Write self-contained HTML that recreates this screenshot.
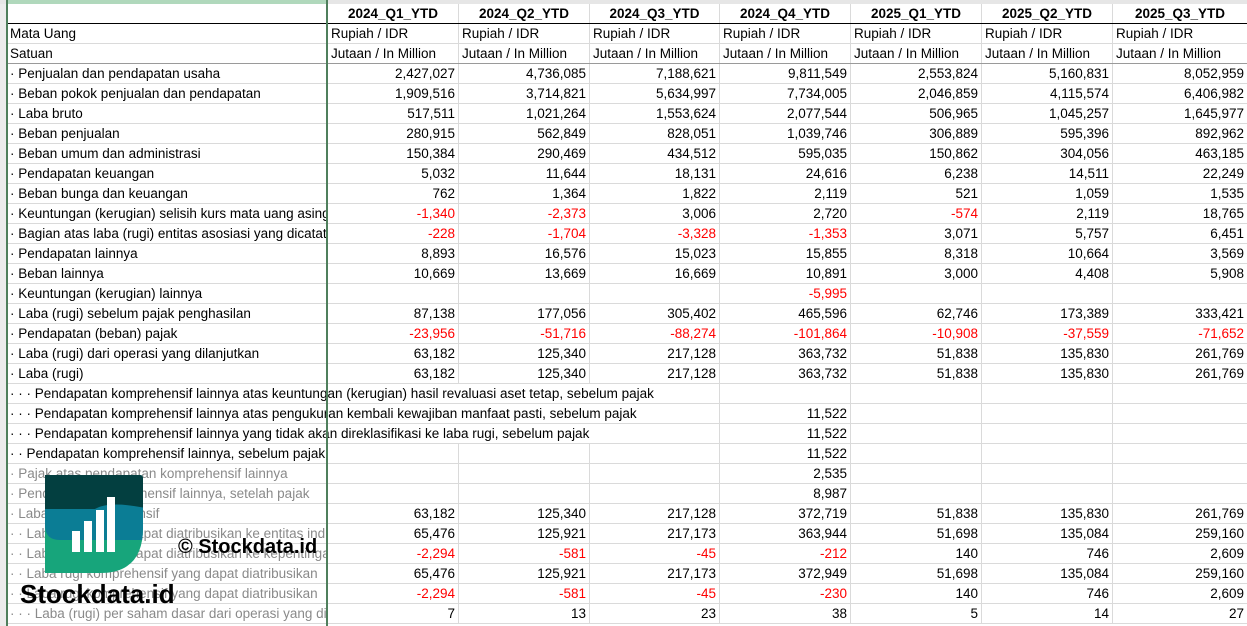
<!DOCTYPE html>
<html><head><meta charset="utf-8"><style>
body{margin:0;width:1247px;height:626px;overflow:hidden;background:#fff;font-family:"Liberation Sans",Arial,sans-serif;font-size:13.5px;position:relative}
#top{position:absolute;left:0;top:0;width:1247px;height:4px;background:#e6e6e6}
#topg{position:absolute;left:6px;top:0;width:321px;height:4px;background:#b0d8bc}
#lefth{position:absolute;left:0;top:4px;width:6px;height:622px;background:#ececec}
table{position:absolute;left:6px;top:4px;border-collapse:collapse;table-layout:fixed;width:1241px}
td{height:19px;border:1px solid #dadada;padding:0 3px;white-space:nowrap;overflow:hidden;text-align:right;color:#000;line-height:19px}
td.l{text-align:left}
tr.h td{font-weight:bold;text-align:center;border-bottom:1px solid #000;border-top:0}
tr.s td{border-bottom:1px solid #9a9a9a}
tr.u td{text-align:left}
.r{color:#f00}
.g{color:#8a8a8a}
.vl{position:absolute;top:0;width:2px;height:626px;background:#4f7f5c}
</style></head><body>
<div id="top"></div><div id="topg"></div><div id="lefth"></div>
<table>
<colgroup><col style="width:321px"><col style="width:131px"><col style="width:131px"><col style="width:130px"><col style="width:131px"><col style="width:131px"><col style="width:131px"><col style="width:135px"></colgroup>
<tr class="h"><td class="l"></td><td>2024_Q1_YTD</td><td>2024_Q2_YTD</td><td>2024_Q3_YTD</td><td>2024_Q4_YTD</td><td>2025_Q1_YTD</td><td>2025_Q2_YTD</td><td>2025_Q3_YTD</td></tr>
<tr class="u"><td>Mata Uang</td><td>Rupiah / IDR</td><td>Rupiah / IDR</td><td>Rupiah / IDR</td><td>Rupiah / IDR</td><td>Rupiah / IDR</td><td>Rupiah / IDR</td><td>Rupiah / IDR</td></tr>
<tr class="u s"><td>Satuan</td><td>Jutaan / In Million</td><td>Jutaan / In Million</td><td>Jutaan / In Million</td><td>Jutaan / In Million</td><td>Jutaan / In Million</td><td>Jutaan / In Million</td><td>Jutaan / In Million</td></tr>
<tr><td class="l">· Penjualan dan pendapatan usaha</td><td>2,427,027</td><td>4,736,085</td><td>7,188,621</td><td>9,811,549</td><td>2,553,824</td><td>5,160,831</td><td>8,052,959</td></tr>
<tr><td class="l">· Beban pokok penjualan dan pendapatan</td><td>1,909,516</td><td>3,714,821</td><td>5,634,997</td><td>7,734,005</td><td>2,046,859</td><td>4,115,574</td><td>6,406,982</td></tr>
<tr><td class="l">· Laba bruto</td><td>517,511</td><td>1,021,264</td><td>1,553,624</td><td>2,077,544</td><td>506,965</td><td>1,045,257</td><td>1,645,977</td></tr>
<tr><td class="l">· Beban penjualan</td><td>280,915</td><td>562,849</td><td>828,051</td><td>1,039,746</td><td>306,889</td><td>595,396</td><td>892,962</td></tr>
<tr><td class="l">· Beban umum dan administrasi</td><td>150,384</td><td>290,469</td><td>434,512</td><td>595,035</td><td>150,862</td><td>304,056</td><td>463,185</td></tr>
<tr><td class="l">· Pendapatan keuangan</td><td>5,032</td><td>11,644</td><td>18,131</td><td>24,616</td><td>6,238</td><td>14,511</td><td>22,249</td></tr>
<tr><td class="l">· Beban bunga dan keuangan</td><td>762</td><td>1,364</td><td>1,822</td><td>2,119</td><td>521</td><td>1,059</td><td>1,535</td></tr>
<tr><td class="l">· Keuntungan (kerugian) selisih kurs mata uang asing</td><td class="r">-1,340</td><td class="r">-2,373</td><td>3,006</td><td>2,720</td><td class="r">-574</td><td>2,119</td><td>18,765</td></tr>
<tr><td class="l">· Bagian atas laba (rugi) entitas asosiasi yang dicatat</td><td class="r">-228</td><td class="r">-1,704</td><td class="r">-3,328</td><td class="r">-1,353</td><td>3,071</td><td>5,757</td><td>6,451</td></tr>
<tr><td class="l">· Pendapatan lainnya</td><td>8,893</td><td>16,576</td><td>15,023</td><td>15,855</td><td>8,318</td><td>10,664</td><td>3,569</td></tr>
<tr><td class="l">· Beban lainnya</td><td>10,669</td><td>13,669</td><td>16,669</td><td>10,891</td><td>3,000</td><td>4,408</td><td>5,908</td></tr>
<tr><td class="l">· Keuntungan (kerugian) lainnya</td><td></td><td></td><td></td><td class="r">-5,995</td><td></td><td></td><td></td></tr>
<tr><td class="l">· Laba (rugi) sebelum pajak penghasilan</td><td>87,138</td><td>177,056</td><td>305,402</td><td>465,596</td><td>62,746</td><td>173,389</td><td>333,421</td></tr>
<tr><td class="l">· Pendapatan (beban) pajak</td><td class="r">-23,956</td><td class="r">-51,716</td><td class="r">-88,274</td><td class="r">-101,864</td><td class="r">-10,908</td><td class="r">-37,559</td><td class="r">-71,652</td></tr>
<tr><td class="l">· Laba (rugi) dari operasi yang dilanjutkan</td><td>63,182</td><td>125,340</td><td>217,128</td><td>363,732</td><td>51,838</td><td>135,830</td><td>261,769</td></tr>
<tr><td class="l">· Laba (rugi)</td><td>63,182</td><td>125,340</td><td>217,128</td><td>363,732</td><td>51,838</td><td>135,830</td><td>261,769</td></tr>
<tr><td class="l" colspan="4">· · · Pendapatan komprehensif lainnya atas keuntungan (kerugian) hasil revaluasi aset tetap, sebelum pajak</td><td></td><td></td><td></td><td></td></tr>
<tr><td class="l" colspan="4">· · · Pendapatan komprehensif lainnya atas pengukuran kembali kewajiban manfaat pasti, sebelum pajak</td><td>11,522</td><td></td><td></td><td></td></tr>
<tr><td class="l" colspan="4">· · · Pendapatan komprehensif lainnya yang tidak akan direklasifikasi ke laba rugi, sebelum pajak</td><td>11,522</td><td></td><td></td><td></td></tr>
<tr><td class="l" colspan="2">· · Pendapatan komprehensif lainnya, sebelum pajak</td><td></td><td></td><td>11,522</td><td></td><td></td><td></td></tr>
<tr><td class="l g">· Pajak atas pendapatan komprehensif lainnya</td><td></td><td></td><td></td><td>2,535</td><td></td><td></td><td></td></tr>
<tr><td class="l g">· Pendapatan komprehensif lainnya, setelah pajak</td><td></td><td></td><td></td><td>8,987</td><td></td><td></td><td></td></tr>
<tr><td class="l g">· Laba rugi komprehensif</td><td>63,182</td><td>125,340</td><td>217,128</td><td>372,719</td><td>51,838</td><td>135,830</td><td>261,769</td></tr>
<tr><td class="l g">· · Laba (rugi) yang dapat diatribusikan ke entitas induk</td><td>65,476</td><td>125,921</td><td>217,173</td><td>363,944</td><td>51,698</td><td>135,084</td><td>259,160</td></tr>
<tr><td class="l g">· · Laba (rugi) yang dapat diatribusikan ke kepentingan</td><td class="r">-2,294</td><td class="r">-581</td><td class="r">-45</td><td class="r">-212</td><td>140</td><td>746</td><td>2,609</td></tr>
<tr><td class="l g">· · Laba rugi komprehensif yang dapat diatribusikan</td><td>65,476</td><td>125,921</td><td>217,173</td><td>372,949</td><td>51,698</td><td>135,084</td><td>259,160</td></tr>
<tr><td class="l g">· · Laba rugi komprehensif yang dapat diatribusikan</td><td class="r">-2,294</td><td class="r">-581</td><td class="r">-45</td><td class="r">-230</td><td>140</td><td>746</td><td>2,609</td></tr>
<tr><td class="l g">· · · Laba (rugi) per saham dasar dari operasi yang dilanjutkan</td><td>7</td><td>13</td><td>23</td><td>38</td><td>5</td><td>14</td><td>27</td></tr>
</table>
<div class="vl" style="left:6px"></div>
<div class="vl" style="left:326px"></div>
<svg style="position:absolute;left:0;top:0" width="1247" height="626">
<defs><clipPath id="c"><path d="M45 475 H140 Q143 475 143 479 V528 Q143 573 100 573 H45 Z"/></clipPath></defs>
<g clip-path="url(#c)">
<rect x="40" y="470" width="110" height="110" fill="#17a57b"/>
<path d="M40 470 H150 V540 H60 Q45 540 45 525 Z" fill="#0b7d95"/>
<path d="M40 470 H150 V509 Q110 500 95 509 L45 509 Z" fill="#033f40"/>
</g>
<g fill="#fff"><rect x="72" y="531" width="8" height="21"/><rect x="84" y="521" width="8" height="31"/><rect x="96" y="510" width="8" height="42"/><rect x="107" y="497" width="8" height="55"/></g>
<text x="20" y="603" font-family="Liberation Sans,sans-serif" font-weight="bold" font-size="26" fill="#000">Stockdata.id</text>
<text x="178" y="553" font-family="Liberation Sans,sans-serif" font-weight="bold" font-size="20" fill="#000">© Stockdata.id</text>
</svg>
</body></html>
